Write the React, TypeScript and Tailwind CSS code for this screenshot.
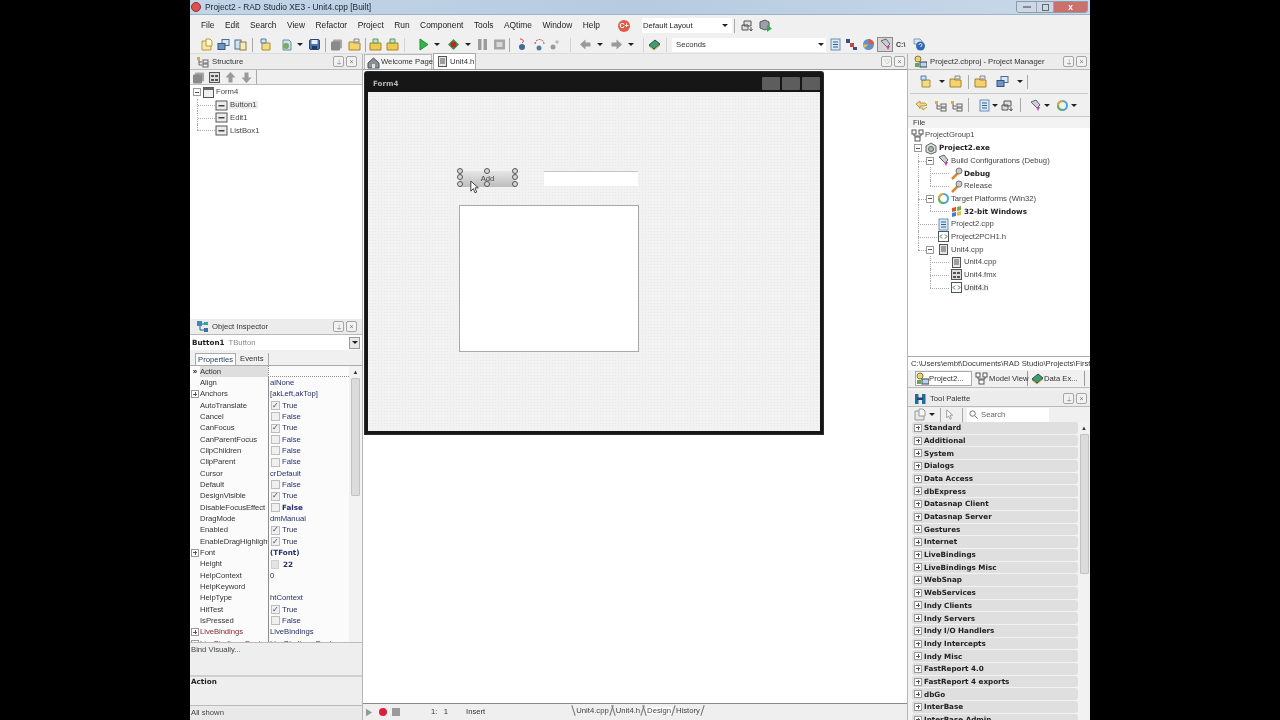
type IconKind =
  | 'doc' | 'windows' | 'sheets' | 'newfile' | 'addfile' | 'save' | 'greybox' | 'folder' | 'folderup'
  | 'play' | 'bug' | 'pause' | 'stop' | 'step' | 'stepb' | 'stepc' | 'left' | 'right' | 'book'
  | 'list' | 'nodes' | 'pie' | 'paint' | 'help' | 'gear' | 'gearplay' | 'home' | 'header' | 'form'
  | 'comp' | 'wrench' | 'ring' | 'flag' | 'cube' | 'code' | 'fmx' | 'group' | 'mgr' | 'tree' | 'palette' | 'sync' | 'inspector'

function Icon({ kind, className }: { kind: IconKind; className?: string }) {
  const inner: Record<IconKind, React.ReactNode> = {
    doc: <><path d="M2 3h6l3 3v6H2z" fill="#f6e9a8" stroke="#b79a3a" /><path d="M6 1h4l2 2v5H6z" fill="#fff8d8" stroke="#b79a3a" /></>,
    windows: <><rect x="5" y="1.5" width="7" height="6" fill="#dbe7f5" stroke="#4a6c95" /><rect x="1" y="5.5" width="7" height="6" fill="#6f95c4" stroke="#33567f" /></>,
    sheets: <><rect x="1" y="2" width="6" height="9" fill="#cfe0f0" stroke="#4a6c95" /><rect x="6" y="4" width="6" height="8" fill="#f4ebc0" stroke="#8a7b40" /></>,
    newfile: <><path d="M3 5h8v7H3z" fill="#f2dc85" stroke="#a98b2d" /><path d="M2 1h5v4H2z" fill="#cfe1f2" stroke="#5a7da5" /></>,
    addfile: <><path d="M3 2h6l2 2v8H3z" fill="#cfe0ea" stroke="#6b8ba5" /><circle cx="6" cy="8" r="3" fill="#77aa66" /></>,
    save: <><rect x="1.5" y="1.5" width="10" height="10" rx="1.5" fill="#4c74ad" stroke="#2c4670" /><rect x="3.5" y="2" width="6" height="4" fill="#e8eef6" /><rect x="4" y="8" width="5" height="3" fill="#20395e" /></>,
    greybox: <><rect x="3" y="1.5" width="9" height="9" rx="1" fill="#a5a5a5" /><rect x="1" y="3.5" width="9" height="9" rx="1" fill="#8a8a8a" /></>,
    folder: <><path d="M1 4h4l1 1h6v7H1z" fill="#f3d26f" stroke="#a48428" /><path d="M6 1h5v3H6z" fill="#e8e8e8" stroke="#888" /></>,
    folderup: <><path d="M1 5h11v7H1z" fill="#f1c94f" stroke="#a48428" /><path d="M4 1h5v4H4z" fill="#bfe3c3" stroke="#5b9b66" /></>,
    play: <path d="M3 1l8 5.5L3 12z" fill="#37b54a" stroke="#1f8f33" />,
    bug: <><path d="M6.5 1l5.5 5.5L6.5 12 1 6.5z" fill="#2e9e4a" /><circle cx="6.5" cy="6.5" r="3" fill="#c0272d" /></>,
    pause: <><rect x="2" y="1" width="3.5" height="11" fill="#9b9b9b" /><rect x="7.5" y="1" width="3.5" height="11" fill="#9b9b9b" /></>,
    stop: <><rect x="1" y="1.5" width="11" height="10" fill="#a5a5a5" /><rect x="3.5" y="4" width="6" height="5" fill="#d8d8d8" /></>,
    step: <><path d="M4 1c4 0 4 3 2 4" fill="none" stroke="#c33" /><circle cx="6" cy="9" r="3" fill="#48698f" /></>,
    stepb: <><path d="M2 6a4.5 4.5 0 0 1 9 0" fill="none" stroke="#c33" strokeDasharray="2 1" /><circle cx="6" cy="10" r="2.5" fill="#5a7a9c" /></>,
    stepc: <><circle cx="4" cy="9" r="2.5" fill="#999" /><path d="M8 2v4M6 4h4" stroke="#aaa" /></>,
    left: <path d="M1 6.5L6.5 1.5v3h5v4h-5v3z" fill="#9a9a9a" />,
    right: <path d="M12 6.5L6.5 1.5v3h-5v4h5v3z" fill="#9a9a9a" />,
    book: <><path d="M1 7l6-5 5 4-6 5z" fill="#3e9a78" stroke="#25523f" /><path d="M1 8l5 4 6-5" fill="none" stroke="#c9a13b" /></>,
    list: <><rect x="2" y="1" width="9" height="11" fill="#dbe8f6" stroke="#6c8fb5" /><path d="M4 4h5M4 6.5h5M4 9h5" stroke="#345f92" /></>,
    nodes: <><rect x="1" y="1" width="4" height="4" fill="#3d4c8c" /><rect x="5" y="5" width="4" height="4" fill="#c5472f" /><rect x="8" y="9" width="4" height="3" fill="#3d4c8c" /></>,
    pie: <><circle cx="6.5" cy="6.5" r="5.5" fill="#5b93cf" /><path d="M6.5 6.5V1a5.5 5.5 0 0 1 5.5 5.5z" fill="#d95b43" /><path d="M1 6.5h5.5l-4 3.5z" fill="#e9c04a" /></>,
    paint: <><path d="M2 3l5-2 4 5-3 3z" fill="#c8ced8" stroke="#666" /><path d="M7 8l4 0-2 4z" fill="#c348a8" /></>,
    help: <><path d="M1 1h6l2 2v3H1z" fill="#dce6f2" stroke="#7c98b8" /><circle cx="7.5" cy="8" r="4.5" fill="#2f6cb5" /><path d="M6 7c0-2 3-2 3 0 0 1-1.5 1-1.5 2" fill="none" stroke="#fff" /></>,
    gear: <><path d="M3 2h7v5H3zM1 6h6v5H1z" fill="#dfdfdf" stroke="#555" /><path d="M10 8v4M8.5 10l1.5 2 1.5-2" fill="none" stroke="#555" /></>,
    gearplay: <><path d="M1 3l5-2 4 2v6l-4 2-5-2z" fill="#9aa2a8" stroke="#555" /><path d="M8 6l5 3.5L8 13z" fill="#2fae45" /></>,
    home: <><path d="M1 7l5.5-5L12 7v5H1z" fill="#8a8f96" stroke="#4f5359" /><rect x="5" y="8" width="3" height="4" fill="#dfe3e8" /></>,
    header: <><rect x="2.5" y="1.5" width="8" height="10" fill="#e8e8e8" stroke="#555" /><path d="M4 4h5M4 6h5M4 8h5" stroke="#555" /></>,
    form: <><rect x="1.5" y="1.5" width="10" height="10" fill="#efefef" stroke="#555" /><rect x="1.5" y="1.5" width="10" height="2.5" fill="#666" /></>,
    comp: <><rect x="1" y="2" width="11" height="9" fill="#ececec" stroke="#555" /><rect x="3.5" y="6" width="6" height="1.5" fill="#444" /></>,
    wrench: <><path d="M2 12l6-6" stroke="#cf8a3c" strokeWidth="2.5" /><circle cx="9" cy="4" r="3" fill="#c9c9c9" stroke="#777" /></>,
    ring: <><circle cx="6.5" cy="6.5" r="4.5" fill="none" stroke="#4ba3d9" strokeWidth="2" /><path d="M2 6.5a4.5 4.5 0 0 1 4.5-4.5" fill="none" stroke="#e8a92e" strokeWidth="2" /><path d="M6.5 11a4.5 4.5 0 0 1-4.5-4.5" fill="none" stroke="#6ab04c" strokeWidth="2" /></>,
    flag: <><path d="M2 3l4-1v4l-4 1z" fill="#d9542b" /><path d="M7 2l4-1v4l-4 1z" fill="#6ab04c" /><path d="M2 8l4-1v4l-4 1z" fill="#3b82c4" /><path d="M7 7l4-1v4l-4 1z" fill="#eec03a" /></>,
    cube: <><path d="M1 4l5-3 5 3v6l-5 2-5-2z" fill="#d6dbe0" stroke="#666" /><circle cx="6" cy="7" r="2.5" fill="#a9c2a0" stroke="#666" /></>,
    code: <><rect x="1.5" y="1.5" width="10" height="10" fill="#fff" stroke="#555" /><path d="M5 4.5L3 6.5l2 2M8 4.5l2 2-2 2" fill="none" stroke="#2d6a55" /></>,
    fmx: <><rect x="1.5" y="1.5" width="10" height="10" fill="#ddd" stroke="#555" /><path d="M3 4h3v2H3zM7 4h3v2H7zM3 8h3v2H3zM7 8h3v2H7z" fill="#555" /></>,
    group: <><rect x="1" y="1" width="4" height="4" fill="#fff" stroke="#555" /><rect x="8" y="1" width="4" height="4" fill="#fff" stroke="#555" /><rect x="4" y="8" width="5" height="4" fill="#fff" stroke="#555" /><path d="M3 5v2h7V5" fill="none" stroke="#555" /></>,
    mgr: <><circle cx="4" cy="4" r="3" fill="#eed27a" stroke="#8a7a2b" /><rect x="6" y="7" width="7" height="5" fill="#bcd4e8" stroke="#345" /><rect x="1" y="8" width="4" height="4" fill="#6aa35a" /></>,
    tree: <><rect x="1" y="2" width="3" height="3" fill="#c9b35a" /><path d="M3 5v5h3M3 7h3" fill="none" stroke="#666" /><rect x="7" y="5" width="5" height="3" fill="#eee" stroke="#666" /><rect x="7" y="9" width="5" height="3" fill="#eee" stroke="#666" /></>,
    palette: <><rect x="1" y="2" width="3.5" height="10" fill="#1f6f9c" /><rect x="8" y="2" width="3.5" height="10" fill="#1f6f9c" /><rect x="3" y="5.5" width="6" height="2.5" fill="#2d3f7a" /></>,
    sync: <><path d="M1 5l4-3v2h5l2 2-3 1H5v2z" fill="#f0d98a" stroke="#b99a3c" /><path d="M12 8l-4 3V9H4" fill="none" stroke="#b99a3c" /></>,
    inspector: <><rect x="1" y="1" width="5" height="5" fill="#2f8fb0" /><rect x="8" y="2" width="4" height="3" fill="#37a3a0" /><rect x="8" y="8" width="4" height="4" fill="#3c6fb0" /><path d="M6 4h2M4 6v4h4" fill="none" stroke="#23627e" /></>,
  }
  return (
    <svg viewBox="0 0 13 13" className={`w-[13px] h-[13px] shrink-0 ${className ?? ''}`}>
      {inner[kind]}
    </svg>
  )
}

const BOLD = "font-bold [font-family:'DejaVu_Sans',sans-serif] text-[7.2px]"

function Caret({ className }: { className?: string }) {
  return <span className={`w-0 h-0 shrink-0 border-x-[3px] border-x-transparent border-t-[3px] border-t-[#222] ${className ?? ''}`} />
}

function Sep({ className }: { className?: string }) {
  return <span className={`w-px h-[14px] bg-[#a9a9a9] shrink-0 ${className ?? ''}`} />
}

function Expander({ open }: { open?: boolean }) {
  return (
    <span className="relative w-[8px] h-[8px] shrink-0 border border-[#9a9a9a] bg-white flex items-center justify-center">
      <span className="w-[4px] h-px bg-[#555]" />
      {!open && <span className="absolute w-px h-[4px] bg-[#555]" />}
    </span>
  )
}

function PanelHeader({ icon, title, className }: { icon: IconKind; title: string; className?: string }) {
  return (
    <div className={`h-[16px] flex items-center pl-[6px] shrink-0 bg-[#ececec] border-b border-[#b9b9b9] ${className ?? 'pr-[3px]'}`}>
      <Icon kind={icon} />
      <span className="ml-[3px] text-[#333]">{title}</span>
      <span className="ml-auto flex gap-[2px]">
        <PanelButton glyph="pin" />
        <PanelButton glyph="close" />
      </span>
    </div>
  )
}

function PanelButton({ glyph }: { glyph: 'pin' | 'close' | 'heart' }) {
  return (
    <span className="w-[11px] h-[11px] border border-[#a5a5a5] rounded-[2px] bg-[#f2f2f2] flex items-center justify-center text-[7px] leading-none text-[#777]">
      {glyph === 'pin' ? '⍊' : glyph === 'heart' ? '♡' : '×'}
    </span>
  )
}

const MENU = ['File', 'Edit', 'Search', 'View', 'Refactor', 'Project', 'Run', 'Component', 'Tools', 'AQtime', 'Window', 'Help']

function TitleBar() {
  return (
    <div className="h-[15px] shrink-0 flex items-center pl-[1px] text-[8.4px] bg-gradient-to-r from-[#c3d5e8] via-[#b6cbe0] to-[#c9d9ea] border-b border-[#9fb3c8]">
      <span className="w-[10px] h-[10px] rounded-full bg-[#d9534f] border border-[#9c2b28]" />
      <span className="ml-[4px] text-[#1c2530]">Project2 - RAD Studio XE3 - Unit4.cpp [Built]</span>
      <span className="ml-auto mr-[2px] flex h-[12px] border border-[#8d9aa9] rounded-b-[3px] overflow-hidden">
        <span className="w-[20px] bg-[#ccd8e4] flex items-center justify-center border-r border-[#9aa6b5]">
          <span className="w-[8px] h-[2px] bg-white border border-[#889]" />
        </span>
        <span className="w-[17px] bg-[#ccd8e4] flex items-center justify-center border-r border-[#9aa6b5]">
          <span className="w-[7px] h-[7px] border border-[#667]" />
        </span>
        <span className="w-[33px] bg-[#c9716a] flex items-center justify-center text-white font-bold leading-none">x</span>
      </span>
    </div>
  )
}

function MenuBar() {
  return (
    <div className="h-[21px] shrink-0 flex items-center pl-[11px] bg-[#f0f0f0]">
      <div className="flex gap-[10.5px] text-[#222] text-[8.4px]">
        {MENU.map(m => <span key={m}>{m}</span>)}
      </div>
      <span className="ml-[18px] w-[12px] h-[12px] rounded-full bg-[#e25b4a] text-white text-[7px] font-bold leading-none flex items-center justify-center">C+</span>
      <div className="ml-[12px] w-[90px] h-[15px] flex items-center justify-between pl-[1px] pr-[4px] bg-white text-[#222]">
        Default Layout
        <Caret />
      </div>
      <Sep className="ml-[2px]" />
      <Icon kind="gear" className="ml-[6.5px]" />
      <Icon kind="gearplay" className="ml-[5px]" />
    </div>
  )
}

function MainToolbar() {
  return (
    <div className="h-[18px] shrink-0 flex items-center pl-[9.5px] bg-[#f0f0f0] border-b border-[#dcdcdc]">
      <Icon kind="doc" />
      <Icon kind="windows" className="ml-[4px]" />
      <Icon kind="sheets" className="ml-[4px]" />
      <Sep className="ml-[5.5px]" />
      <Icon kind="newfile" className="ml-[5.5px]" />
      <Icon kind="addfile" className="ml-[8px]" />
      <Caret className="ml-[4.5px]" />
      <Icon kind="save" className="ml-[4.5px]" />
      <Sep className="ml-[4.5px]" />
      <Icon kind="greybox" className="ml-[3.5px]" />
      <Icon kind="folder" className="ml-[5px]" />
      <Sep className="ml-[4.5px]" />
      <Icon kind="folderup" className="ml-[2.5px]" />
      <Icon kind="folderup" className="ml-[4px]" />
      <Sep className="ml-[5.5px] opacity-40" />
      <Icon kind="play" className="ml-[11.5px]" />
      <Caret className="ml-[4.5px]" />
      <Icon kind="bug" className="ml-[6.5px]" />
      <Caret className="ml-[5.5px]" />
      <Icon kind="pause" className="ml-[4.5px]" />
      <Icon kind="stop" className="ml-[4px]" />
      <Sep className="ml-[3.5px]" />
      <Icon kind="step" className="ml-[5.5px]" />
      <Icon kind="stepb" className="ml-[4px]" />
      <Icon kind="stepc" className="ml-[3px]" />
      <Sep className="ml-[8.5px] opacity-40" />
      <Icon kind="left" className="ml-[7.5px]" />
      <Caret className="ml-[5.5px]" />
      <Icon kind="right" className="ml-[6.5px]" />
      <Caret className="ml-[5.5px]" />
      <Sep className="ml-[9px] opacity-40" />
      <Icon kind="book" className="ml-[3.5px]" />
      <Sep className="ml-[5.5px] opacity-40" />
      <div className="ml-[5px] w-[154px] h-[14px] flex items-center justify-between pl-[4px] pr-[2px] bg-white text-[#333]">
        Seconds
        <Caret />
      </div>
      <Icon kind="list" className="ml-[2.5px]" />
      <Icon kind="nodes" className="ml-[3px]" />
      <Icon kind="pie" className="ml-[4px]" />
      <span className="ml-[2.5px] w-[16px] h-[15px] flex items-center justify-center bg-[#d5d5d5] border border-[#8a8a8a]">
        <Icon kind="paint" />
      </span>
      <span className="ml-[3px] w-[12px] text-[7px] font-bold text-[#333]">C:\</span>
      <Icon kind="help" className="ml-[4.5px]" />
    </div>
  )
}

const STRUCTURE = [
  { label: 'Button1', hl: true },
  { label: 'Edit1' },
  { label: 'ListBox1' },
]

function StructurePanel() {
  return (
    <div className="h-[265px] shrink-0 flex flex-col">
      <PanelHeader icon="tree" title="Structure" className="pr-[5px]" />
      <div className="h-[15px] shrink-0 flex items-center pl-[2px] gap-[3px] border-b border-[#bdbdbd]">
        <Icon kind="greybox" />
        <Icon kind="fmx" />
        <Icon kind="left" className="rotate-90" />
        <Icon kind="right" className="rotate-90" />
        <Sep />
      </div>
      <div className="flex-1 bg-white pt-[1px] text-[#444]">
        <div className="h-[12.7px] flex items-center pl-[3px]">
          <Expander open />
          <Icon kind="form" className="ml-[1px]" />
          <span className="ml-[1px]">Form4</span>
        </div>
        {STRUCTURE.map((s, i) => (
          <div key={s.label} className="h-[12.7px] flex items-center pl-[7px]">
            <span className={`relative w-[18px] h-full ${i === 2 ? '' : 'border-l border-dotted border-[#aaa]'}`}>
              <span className={`absolute top-0 left-0 h-1/2 ${i === 2 ? 'border-l border-dotted border-[#aaa]' : ''}`} />
              <span className="absolute left-0 top-1/2 w-full border-t border-dotted border-[#aaa]" />
            </span>
            <Icon kind="comp" />
            <span className={`ml-[1px] px-[1px] ${s.hl ? 'bg-[#ececec]' : ''}`}>{s.label}</span>
          </div>
        ))}
      </div>
    </div>
  )
}

type Prop = { n: string; v?: string; check?: boolean; bold?: boolean; plus?: boolean; red?: boolean; spin?: boolean; sel?: boolean }

const PROPS: Prop[] = [
  { n: 'Action', sel: true },
  { n: 'Align', v: 'alNone' },
  { n: 'Anchors', v: '[akLeft,akTop]', plus: true },
  { n: 'AutoTranslate', v: 'True', check: true },
  { n: 'Cancel', v: 'False', check: false },
  { n: 'CanFocus', v: 'True', check: true },
  { n: 'CanParentFocus', v: 'False', check: false },
  { n: 'ClipChildren', v: 'False', check: false },
  { n: 'ClipParent', v: 'False', check: false },
  { n: 'Cursor', v: 'crDefault' },
  { n: 'Default', v: 'False', check: false },
  { n: 'DesignVisible', v: 'True', check: true },
  { n: 'DisableFocusEffect', v: 'False', check: false, bold: true },
  { n: 'DragMode', v: 'dmManual' },
  { n: 'Enabled', v: 'True', check: true },
  { n: 'EnableDragHighlight', v: 'True', check: true },
  { n: 'Font', v: '(TFont)', plus: true, bold: true },
  { n: 'Height', v: '22', spin: true, bold: true },
  { n: 'HelpContext', v: '0' },
  { n: 'HelpKeyword' },
  { n: 'HelpType', v: 'htContext' },
  { n: 'HitTest', v: 'True', check: true },
  { n: 'IsPressed', v: 'False', check: false },
  { n: 'LiveBindings', v: 'LiveBindings', plus: true, red: true },
  { n: 'LiveBindings Designer', v: 'LiveBindings Designer', plus: true, red: true },
]

function PropRow({ p }: { p: Prop }) {
  const hasBox = p.check !== undefined
  return (
    <div className="h-[11.34px] flex items-center shrink-0">
      <span className="w-[10px] shrink-0 flex items-center justify-center">
        {p.sel && <span className="text-[8px] font-bold leading-none text-[#222]">»</span>}
        {p.plus && <Expander />}
      </span>
      <span className={`w-[68px] h-full flex items-center shrink-0 overflow-hidden whitespace-nowrap tracking-[-0.05px] ${p.sel ? 'bg-[#dedede]' : ''} ${p.red ? 'text-[#8a2530]' : 'text-[#333]'}`}>
        {p.n}
      </span>
      <span className={`flex-1 h-full flex items-center overflow-hidden whitespace-nowrap pl-[1px] border-l border-[#8d8d8d] text-[#25306b] ${p.bold ? BOLD : ''} ${p.sel ? 'border-b border-dotted' : ''}`}>
        {hasBox && (
          <span className="w-[9px] h-[9px] ml-[1px] mr-[2px] shrink-0 border border-[#bdbdbd] bg-[#f0f0f0] flex items-center justify-center text-[8px] leading-none text-[#445]">
            {p.check ? '✓' : ''}
          </span>
        )}
        {p.spin && <span className="w-[8px] h-[9px] ml-[1px] mr-[4px] shrink-0 bg-[#e4e4e4] border border-[#d0d0d0]" />}
        {p.v}
      </span>
    </div>
  )
}

function ObjectInspector() {
  return (
    <div className="flex-1 min-h-0 flex flex-col">
      <PanelHeader icon="inspector" title="Object Inspector" className="pr-[5px]" />
      <div className="h-[15px] shrink-0 flex items-center bg-white pl-[2px] pr-[2px]">
        <span className={`${BOLD} text-[#222]`}>Button1</span>
        <span className="ml-[4px] text-[#888]">TButton</span>
        <span className="ml-auto w-[11px] h-[12px] border border-[#999] bg-[#e8e8e8] flex items-center justify-center">
          <Caret />
        </span>
      </div>
      <div className="h-[16px] shrink-0 flex items-end pl-[5px] border-b border-[#aaa]">
        <span className="h-[12px] px-[2px] border border-b-0 border-[#aaa] bg-white text-[#25406b] flex items-center">Properties</span>
        <span className="h-[12px] px-[4px] text-[#333] flex items-center border-r border-[#aaa]">Events</span>
      </div>
      <div className="h-[276px] shrink-0 flex bg-[#fbfbfb] overflow-hidden">
        <div className="w-[159px] shrink-0 flex flex-col">
          {PROPS.map(p => <PropRow key={p.n} p={p} />)}
        </div>
        <Scrollbar thumb="h-[118px]" />
      </div>
      <div className="h-[33px] shrink-0 pl-[1px] pt-[3px] bg-[#eeeeee] border-t border-[#bbb] text-[#444]">Bind Visually...</div>
      <div className={`h-[30px] shrink-0 pl-[1px] pt-[1px] bg-[#eeeeee] border-t-2 border-[#cfcfcf] ${BOLD} text-[#222]`}>Action</div>
      <div className="flex-1 flex items-center pl-[1px] bg-[#e9e9e9] border-t border-[#bbb] text-[#444]">All shown</div>
    </div>
  )
}

function Scrollbar({ thumb, className }: { thumb: string; className?: string }) {
  return (
    <div className={`shrink-0 flex flex-col items-center bg-[#f2f2f2] ${className ?? 'w-[13px]'}`}>
      <span className="h-[12px] flex items-center text-[6px] leading-none text-[#333]">▲</span>
      <span className={`w-[9px] bg-[#dcdcdc] border border-[#c2c2c2] rounded-[1px] ${thumb}`} />
    </div>
  )
}

function SlantTab({ label, active }: { label: string; active?: boolean }) {
  return <span className={`px-[1px] ${active ? 'bg-white' : ''}`}>{label}</span>
}

function Slant({ dir }: { dir: 'l' | 'r' }) {
  return <span className={`w-px h-[11px] bg-[#777] shrink-0 ${dir === 'l' ? '-rotate-[18deg]' : 'rotate-[18deg]'}`} />
}

function Designer() {
  return (
    <div className="flex-1 min-h-0 bg-white pl-[2px] pt-[2px] overflow-hidden border-b border-[#8a8a8a]">
      <div className="w-[458px] h-[362px] flex flex-col bg-[#161616] rounded-t-[2px] px-[3px] pb-[3px] shadow-[0_0_0_1px_#2b2b2b]">
        <div className={`h-[20px] shrink-0 flex items-center pl-[5px] pt-[3px] text-[#b5b5b5] ${BOLD}`}>
          Form4
          <span className="ml-auto flex gap-[2px]">
            <span className="w-[18px] h-[13px] rounded-[1px] bg-[#5d5d5d]" />
            <span className="w-[18px] h-[13px] rounded-[1px] bg-[#5d5d5d]" />
            <span className="w-[18px] h-[13px] rounded-[1px] bg-[#5d5d5d]" />
          </span>
        </div>
        <div className="flex-1 relative bg-[#f2f2f2] bg-[radial-gradient(#e7e7e7_0.6px,transparent_0.6px)] bg-[length:3px_3px]">
          {/* components sit on the form canvas at their design positions */}
          <div className="absolute left-[92px] top-[79px] w-[55px] h-[16px] flex items-center justify-center bg-gradient-to-b from-[#e6e6e6] to-[#bdbdbd] text-[#444]">
            Add
            {[
              'left-[-3px] top-[-3px]', 'left-[-3px] top-[3px]', 'left-[-3px] top-[10px]',
              'left-[24px] top-[-3px]', 'left-[24px] top-[10px]',
              'left-[52px] top-[-3px]', 'left-[52px] top-[3px]', 'left-[52px] top-[10px]',
            ].map(c => (
              <span key={c} className={`absolute w-[6px] h-[6px] rounded-full bg-[#d8d8d8] border border-[#555] ${c}`} />
            ))}
          </div>
          <div className="absolute left-[176px] top-[79px] w-[94px] h-[15px] bg-white border-t border-[#c4c4c4]" />
          <div className="absolute left-[91px] top-[113px] w-[180px] h-[147px] bg-white border border-[#a9a9a9]" />
          <svg viewBox="0 0 12 16" className="absolute left-[102px] top-[88px] w-[10px] h-[14px]">
            <path d="M1 1v12l3-3 2 5 2-1-2-5h4z" fill="#fff" stroke="#222" />
          </svg>
        </div>
      </div>
    </div>
  )
}

function CenterColumn() {
  return (
    <div className="w-[546px] shrink-0 flex flex-col border-x border-[#b5b5b5]">
      <div className="h-[16px] shrink-0 flex items-end pl-[1px] pr-[2px] bg-[#ececec] border-b border-[#9a9a9a]">
        <span className="h-[15px] w-[68px] flex items-center pl-[2px] whitespace-nowrap border border-b-0 border-[#bbb] bg-[#f4f4f4] text-[#333]">
          <Icon kind="home" />
          <span className="ml-[1px]">Welcome Page</span>
        </span>
        <span className="h-[16px] w-[43px] ml-[1px] flex items-center pl-[2px] whitespace-nowrap border border-b-0 border-[#aaa] bg-white text-[#333]">
          <Icon kind="header" />
          <span className="ml-[1px]">Unit4.h</span>
        </span>
        <span className="ml-auto mb-[2px] flex gap-[2px]">
          <PanelButton glyph="heart" />
          <PanelButton glyph="close" />
        </span>
      </div>
      <Designer />
      <div className="h-[16px] shrink-0 flex items-center pl-[2px] bg-[#efefef] text-[#333]">
        <svg viewBox="0 0 8 10" className="ml-[1px] w-[6px] h-[9px]"><path d="M0 0l8 5-8 5z" fill="#8f9a9a" /></svg>
        <span className="ml-[7px] w-[8px] h-[8px] rounded-full bg-[#d8213a]" />
        <span className="ml-[5px] w-[8px] h-[8px] bg-[#9a9a9a]" />
        <span className="ml-[31px] w-[24px] whitespace-pre">1:   1</span>
        <span className="ml-[11px]">Insert</span>
        <span className="ml-[88px] -mt-[3px] flex items-center gap-[1px] text-[#444]">
          <Slant dir="l" />
          <SlantTab label="Unit4.cpp" />
          <Slant dir="r" />
          <Slant dir="l" />
          <SlantTab label="Unit4.h" />
          <Slant dir="r" />
          <Slant dir="l" />
          <SlantTab label="Design" active />
          <Slant dir="r" />
          <SlantTab label="History" />
          <Slant dir="r" />
        </span>
      </div>
    </div>
  )
}

type TreeNode = { label: string; icon: IconKind; depth: number; toggle?: boolean; bold?: boolean; hl?: boolean; outer?: 'full' | 'half'; inner?: 'full' | 'half' }

const TREE: TreeNode[] = [
  { label: 'ProjectGroup1', icon: 'group', depth: 0 },
  { label: 'Project2.exe', icon: 'cube', depth: 0, toggle: true, bold: true },
  { label: 'Build Configurations (Debug)', icon: 'paint', depth: 1, toggle: true, outer: 'full' },
  { label: 'Debug', icon: 'wrench', depth: 2, bold: true, outer: 'full', inner: 'full' },
  { label: 'Release', icon: 'wrench', depth: 2, outer: 'full', inner: 'half' },
  { label: 'Target Platforms (Win32)', icon: 'ring', depth: 1, toggle: true, outer: 'full' },
  { label: '32-bit Windows', icon: 'flag', depth: 2, bold: true, outer: 'full', inner: 'half' },
  { label: 'Project2.cpp', icon: 'list', depth: 1, outer: 'full' },
  { label: 'Project2PCH1.h', icon: 'code', depth: 1, outer: 'full' },
  { label: 'Unit4.cpp', icon: 'header', depth: 1, toggle: true, outer: 'half' },
  { label: 'Unit4.cpp', icon: 'header', depth: 2, inner: 'full' },
  { label: 'Unit4.fmx', icon: 'fmx', depth: 2, inner: 'full' },
  { label: 'Unit4.h', icon: 'code', depth: 2, hl: true, inner: 'half' },
]

const TREE_INDENT: Record<number, string> = { 0: 'pl-[4px]', 1: 'pl-[16px]', 2: 'pl-[29px]' }

function TreeRow({ node }: { node: TreeNode }) {
  const isRoot = node.label === 'ProjectGroup1'
  const dots = 'absolute border-dotted border-[#aaa]'
  return (
    <div className={`relative h-[12.7px] flex items-center ${isRoot ? '' : TREE_INDENT[node.depth]}`}>
      {node.outer && <span className={`${dots} left-[8px] top-0 border-l ${node.outer === 'half' ? 'h-1/2' : 'h-full'}`} />}
      {node.inner && <span className={`${dots} left-[20px] top-0 border-l ${node.inner === 'half' ? 'h-1/2' : 'h-full'}`} />}
      {node.depth === 1 && <span className={`${dots} left-[8px] top-1/2 border-t ${node.toggle ? 'w-[8px]' : 'w-[19px]'}`} />}
      {node.depth === 2 && <span className={`${dots} left-[20px] top-1/2 border-t w-[19px]`} />}
      {node.toggle ? <Expander open /> : !isRoot && <span className="w-[8px] shrink-0" />}
      <Icon kind={node.icon} className={isRoot ? 'ml-[1px]' : 'ml-[3px]'} />
      <span className={`ml-[1px] whitespace-nowrap ${node.bold ? `${BOLD} text-[#222]` : 'text-[#444]'} ${node.hl ? 'bg-[#f0f0f0]' : ''}`}>
        {node.label}
      </span>
    </div>
  )
}

const PALETTE = [
  'Standard', 'Additional', 'System', 'Dialogs', 'Data Access', 'dbExpress', 'Datasnap Client', 'Datasnap Server',
  'Gestures', 'Internet', 'LiveBindings', 'LiveBindings Misc', 'WebSnap', 'WebServices', 'Indy Clients', 'Indy Servers',
  'Indy I/O Handlers', 'Indy Intercepts', 'Indy Misc', 'FastReport 4.0', 'FastReport 4 exports', 'dbGo', 'InterBase', 'InterBase Admin',
]

function RightColumn() {
  return (
    <div className="flex-1 min-w-0 flex flex-col">
      <PanelHeader icon="mgr" title="Project2.cbproj - Project Manager" />
      <div className="h-[23px] shrink-0 flex items-center pl-[10.5px]">
        <Icon kind="newfile" />
        <Caret className="ml-[7px]" />
        <Icon kind="folder" className="ml-[4.5px]" />
        <Sep className="ml-[6px]" />
        <Icon kind="folder" className="ml-[4.5px]" />
        <Icon kind="windows" className="ml-[9.5px]" />
        <Caret className="ml-[8px]" />
        <Sep className="ml-[4px]" />
      </div>
      <div className="h-[23px] shrink-0 flex items-center pl-[5px] mx-[2px] border-t border-[#c8c8c8]">
        <Icon kind="sync" />
        <Icon kind="tree" className="ml-[5.5px]" />
        <Icon kind="tree" className="ml-[3.5px]" />
        <Sep className="ml-[5px]" />
        <Icon kind="list" className="ml-[8.5px]" />
        <Caret className="ml-[1.5px]" />
        <Icon kind="gear" className="ml-[3px]" />
        <Sep className="ml-[6px]" />
        <Icon kind="paint" className="ml-[7.5px]" />
        <Caret className="ml-[2px]" />
        <Icon kind="ring" className="ml-[6.5px]" />
        <Caret className="ml-[2px]" />
      </div>
      <div className="h-[12px] shrink-0 flex items-center pl-[5px] pt-[1px] bg-[#f3f3f3] border-t border-[#c8c8c8] text-[#333]">File</div>
      <div className="h-[228px] shrink-0 bg-white pl-[2px] pt-[1px]">
        {TREE.map((n, i) => <TreeRow key={i} node={n} />)}
      </div>
      <div className="h-[14px] shrink-0 flex items-center pl-[3px] overflow-hidden whitespace-nowrap bg-white border-t border-[#aaa] text-[#333]">
        C:\Users\embt\Documents\RAD Studio\Projects\FirstProject
      </div>
      <div className="h-[18px] shrink-0 flex items-center pl-[7px] whitespace-nowrap border-b border-[#bbb] text-[#333]">
        <span className="w-[57px] h-[15px] flex items-center border border-[#aaa] bg-white"><Icon kind="mgr" />Project2...</span>
        <span className="ml-[3px] w-[53px] h-[15px] flex items-center border-r border-[#999]"><Icon kind="group" /><span className="ml-[1px]">Model View</span></span>
        <span className="ml-[3px] w-[54px] h-[15px] flex items-center border-r border-[#999]"><Icon kind="book" />Data Ex...</span>
      </div>
      <div className="h-[3px] shrink-0" />
      <PanelHeader icon="palette" title="Tool Palette" />
      <div className="h-[15px] shrink-0 flex items-center pl-[5px]">
        <Icon kind="doc" className="grayscale" />
        <Caret className="ml-[3px]" />
        <Sep className="ml-[5px]" />
        <svg viewBox="0 0 12 16" className="ml-[5px] w-[8px] h-[11px]"><path d="M1 1v12l3-3 2 5 2-1-2-5h4z" fill="#fff" stroke="#777" /></svg>
        <Sep className="ml-[8px]" />
        <div className="ml-[4px] w-[82px] h-[14px] flex items-center pl-[2px] bg-white text-[#666]">
          <svg viewBox="0 0 10 10" className="w-[9px] h-[9px]"><circle cx="4" cy="4" r="3" fill="none" stroke="#666" /><path d="M6.5 6.5L9.5 9.5" stroke="#666" /></svg>
          <span className="ml-[3px]">Search</span>
        </div>
      </div>
      <div className="flex-1 min-h-0 flex overflow-hidden bg-[#f2f2f2]">
        <div className="w-[170px] shrink-0 pl-[4px]">
          {PALETTE.map(p => (
            <div key={p} className={`h-[11.7px] mb-px flex items-center pl-[2px] rounded-[3px] bg-[#dfdfdf] text-[#222] ${BOLD}`}>
              <Expander />
              <span className="ml-[2px]">{p}</span>
            </div>
          ))}
        </div>
        <Scrollbar thumb="h-[140px]" className="w-[10px] ml-[1px]" />
      </div>
    </div>
  )
}

export default function App() {
  return (
    <div className="w-[1280px] h-[720px] flex justify-center overflow-hidden bg-black [font-family:'Liberation_Sans',Arial,sans-serif] text-[7.7px] leading-none">
      <div className="w-[900px] h-full flex flex-col bg-[#f0f0f0] blur-[0.4px]">
        <TitleBar />
        <MenuBar />
        <MainToolbar />
        <div className="flex-1 min-h-0 flex">
          <div className="w-[172px] shrink-0 flex flex-col">
            <StructurePanel />
            <ObjectInspector />
          </div>
          <CenterColumn />
          <RightColumn />
        </div>
      </div>
    </div>
  )
}
